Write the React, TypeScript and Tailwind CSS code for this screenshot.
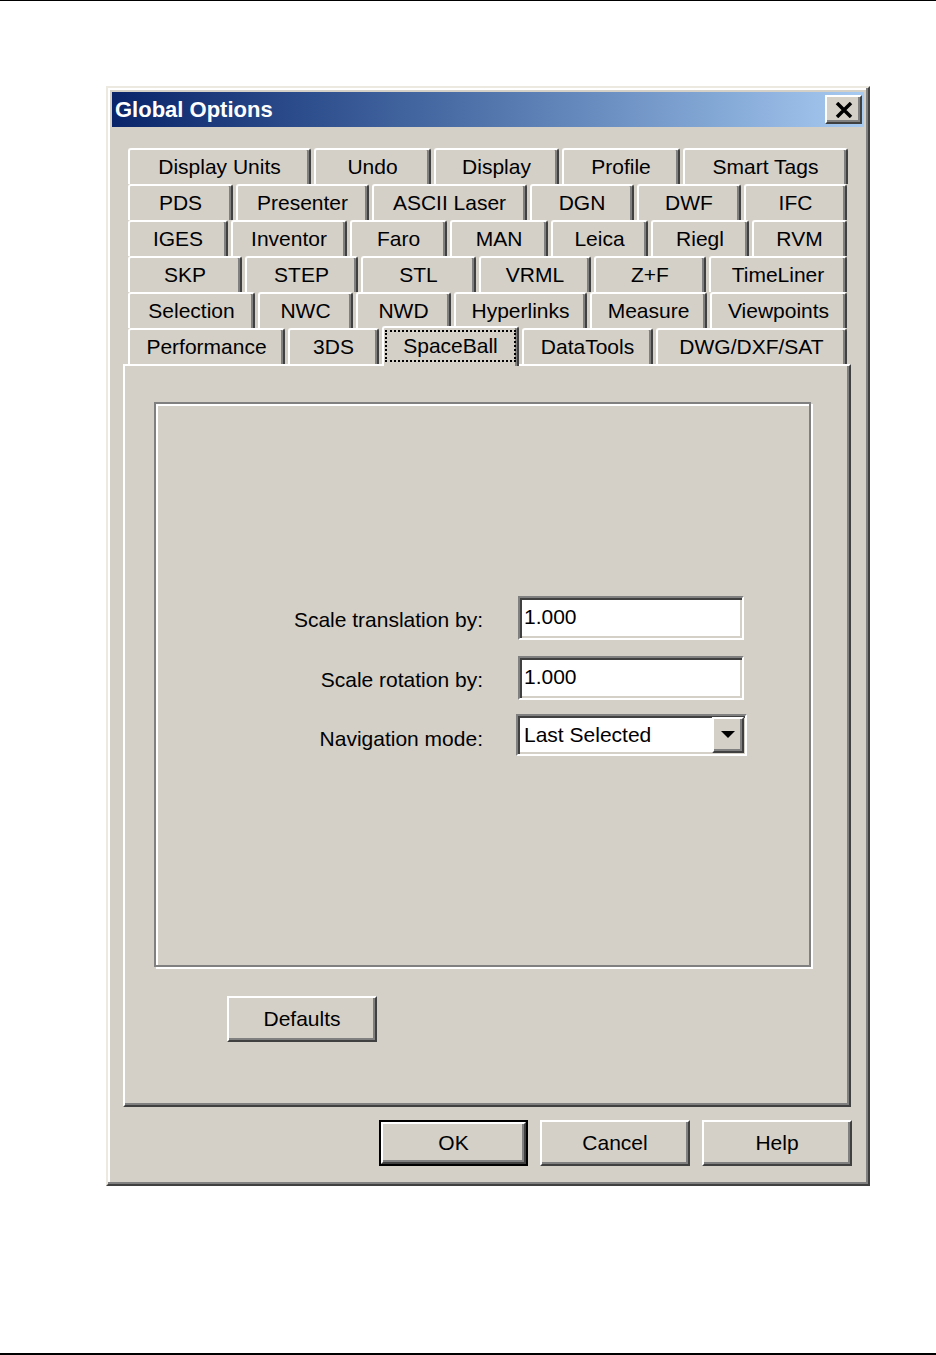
import React from 'react';

type Tab = { label: string; w: string; selected?: boolean };

const tabRows: Tab[][] = [
  [
    { label: 'Display Units', w: 'w-[183px]' },
    { label: 'Undo', w: 'w-[117px]' },
    { label: 'Display', w: 'w-[125px]' },
    { label: 'Profile', w: 'w-[118px]' },
    { label: 'Smart Tags', w: 'w-[165px]' },
  ],
  [
    { label: 'PDS', w: 'w-[105px]' },
    { label: 'Presenter', w: 'w-[133px]' },
    { label: 'ASCII Laser', w: 'w-[155px]' },
    { label: 'DGN', w: 'w-[104px]' },
    { label: 'DWF', w: 'w-[104px]' },
    { label: 'IFC', w: 'w-[103px]' },
  ],
  [
    { label: 'IGES', w: 'w-[100px]' },
    { label: 'Inventor', w: 'w-[116px]' },
    { label: 'Faro', w: 'w-[97px]' },
    { label: 'MAN', w: 'w-[98px]' },
    { label: 'Leica', w: 'w-[97px]' },
    { label: 'Riegl', w: 'w-[98px]' },
    { label: 'RVM', w: 'w-[95px]' },
  ],
  [
    { label: 'SKP', w: 'w-[114px]' },
    { label: 'STEP', w: 'w-[113px]' },
    { label: 'STL', w: 'w-[115px]' },
    { label: 'VRML', w: 'w-[112px]' },
    { label: 'Z+F', w: 'w-[112px]' },
    { label: 'TimeLiner', w: 'w-[138px]' },
  ],
  [
    { label: 'Selection', w: 'w-[127px]' },
    { label: 'NWC', w: 'w-[95px]' },
    { label: 'NWD', w: 'w-[95px]' },
    { label: 'Hyperlinks', w: 'w-[133px]' },
    { label: 'Measure', w: 'w-[117px]' },
    { label: 'Viewpoints', w: 'w-[137px]' },
  ],
  [
    { label: 'Performance', w: 'w-[157px]' },
    { label: '3DS', w: 'w-[91px]' },
    { label: 'SpaceBall', w: 'w-[137px]', selected: true },
    { label: 'DataTools', w: 'w-[131px]' },
    { label: 'DWG/DXF/SAT', w: 'w-[191px]' },
  ],
];

// classic 3d edges
const raised =
  'border-2 border-t-white border-l-white border-r-[#404040] border-b-[#404040] shadow-[inset_-2px_-2px_0_#808080]';
const sunken =
  'border-2 border-t-[#808080] border-l-[#808080] border-r-white border-b-white shadow-[inset_2px_2px_0_#404040,inset_-2px_-2px_0_#d4d0c8]';

function TabButton({ tab }: { tab: Tab }) {
  if (tab.selected) {
    return (
      <div
        className={`${tab.w} relative z-10 -mt-[2px] h-[40px] shrink-0 rounded-t-[3px] border-t-2 border-l-2 border-r-2 border-t-white border-l-white border-r-[#404040] bg-[#d4d0c8] px-[1px] pt-[2px] shadow-[inset_-2px_0_0_#808080]`}
      >
        <div className="flex h-[32px] items-center justify-center border-2 border-dotted border-black">
          {tab.label}
        </div>
      </div>
    );
  }
  return (
    <div
      className={`${tab.w} flex h-[36px] shrink-0 items-center justify-center rounded-t-[3px] border-t-2 border-l-2 border-r-2 border-t-white border-l-white border-r-[#404040] bg-[#d4d0c8] shadow-[inset_-2px_0_0_#808080]`}
    >
      {tab.label}
    </div>
  );
}

function Button({ label, size = 'h-[46px] w-[150px]', className = '' }: { label: string; size?: string; className?: string }) {
  return (
    <div className={`flex items-center justify-center bg-[#d4d0c8] ${size} ${raised} ${className}`}>
      {label}
    </div>
  );
}

export default function App() {
  return (
    <div
      className="h-[1355px] w-[936px] border-t border-b-2 border-black bg-white text-[21px] text-black"
      style={{ fontFamily: '"Liberation Sans", Arial, sans-serif' }}
    >
      {/* dialog window */}
      <div className="ml-[106px] mt-[85px] h-[1100px] w-[764px] border-2 border-t-[#ece9e1] border-l-[#ece9e1] border-r-[#404040] border-b-[#404040] bg-[#d4d0c8] p-[4px] shadow-[inset_-2px_-2px_0_#808080,inset_2px_2px_0_#fff]">
        {/* title bar */}
        <div className="flex h-[35px] items-center justify-between bg-gradient-to-r from-[#0a246a] to-[#a6caf0] pl-[3px] pr-[2px]">
          <span className="text-[22px] font-bold text-white">Global Options</span>
          <div className={`flex h-[29px] w-[37px] items-center justify-center bg-[#d4d0c8] ${raised}`}>
            <svg width="18" height="16" viewBox="0 0 18 16">
              <path d="M2 1 L16 15 M16 1 L2 15" stroke="#000" strokeWidth="3.5" />
            </svg>
          </div>
        </div>

        {/* tabs + panel */}
        <div className="ml-[11px] mr-[13px] mt-[21px]">
          <div className="flex flex-col pl-[5px] pr-[4px]">
            {tabRows.map((row, i) => (
              <div key={i} className="flex h-[36px] items-start gap-[3px]">
                {row.map((t) => (
                  <TabButton key={t.label} tab={t} />
                ))}
              </div>
            ))}
          </div>

          <div className="h-[743px] border-2 border-t-white border-l-white border-r-[#404040] border-b-[#404040] shadow-[inset_-2px_-2px_0_#808080]">
            {/* group box */}
            <div className="ml-[29px] mt-[36px] h-[565px] w-[657px] border-2 border-[#808080] shadow-[2px_2px_0_#fff,inset_2px_2px_0_#fff]">
              <div className="flex flex-col pt-[192px]">
                <div className="flex h-[44px] items-center">
                  <div className="w-[327px] pt-[4px] text-right">Scale translation by:</div>
                  <div className={`ml-[35px] flex h-[44px] w-[226px] items-start bg-white pl-[4px] pt-[3px] ${sunken}`}>
                    1.000
                  </div>
                </div>
                <div className="mt-[16px] flex h-[44px] items-center">
                  <div className="w-[327px] pt-[4px] text-right">Scale rotation by:</div>
                  <div className={`ml-[35px] flex h-[44px] w-[226px] items-start bg-white pl-[4px] pt-[3px] ${sunken}`}>
                    1.000
                  </div>
                </div>
                <div className="mt-[14px] flex h-[42px] items-center">
                  <div className="w-[327px] pt-[8px] text-right">Navigation mode:</div>
                  <div className={`ml-[33px] flex h-[42px] w-[231px] items-center justify-between bg-white pl-[6px] pr-[1px] ${sunken}`}>
                    <span>Last Selected</span>
                    <div className={`flex h-[36px] w-[32px] items-center justify-center bg-[#d4d0c8] ${raised}`}>
                      <svg width="14" height="8" viewBox="0 0 14 8">
                        <polygon points="0,0 14,0 7,7" fill="#000" />
                      </svg>
                    </div>
                  </div>
                </div>
              </div>
            </div>

            <Button label="Defaults" className="ml-[102px] mt-[29px]" />
          </div>

          {/* bottom buttons */}
          <div className="mr-[-1px] mt-[13px] flex justify-end gap-[12px]">
            <div className="border-2 border-black">
              <Button label="OK" size="h-[42px] w-[145px]" />
            </div>
            <Button label="Cancel" />
            <Button label="Help" />
          </div>
        </div>
      </div>
    </div>
  );
}
